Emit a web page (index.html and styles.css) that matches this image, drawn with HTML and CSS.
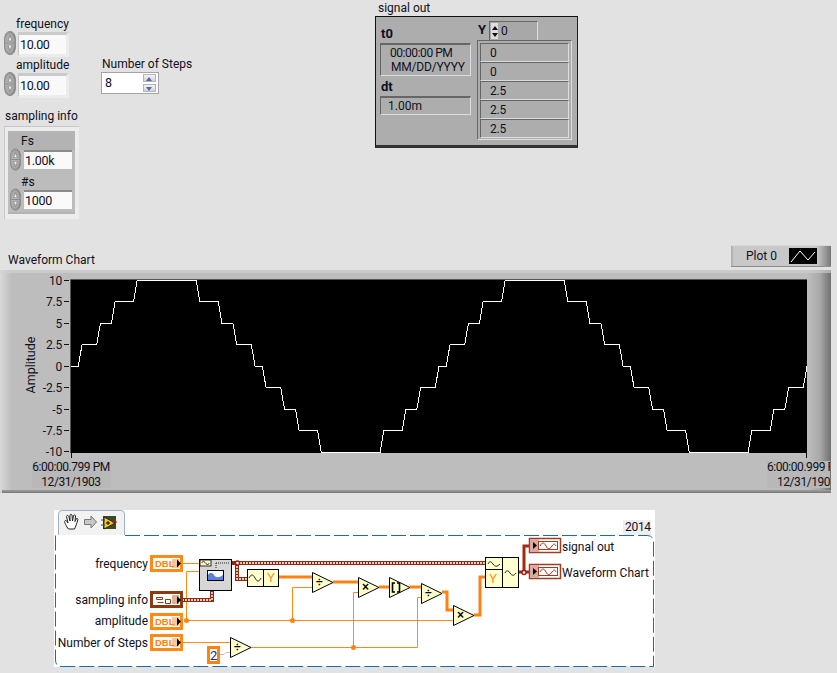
FILE: index.html
```html
<!DOCTYPE html>
<html lang="en">
<head>
<meta charset="utf-8">
<title>LabVIEW panel</title>
<link rel="stylesheet" href="styles.css">
</head>
<body>
<svg class="defs" width="0" height="0" aria-hidden="true">
  <defs>
    <radialGradient id="spinFill" cx="45%" cy="50%" r="62%">
      <stop offset="0" stop-color="#c4c4c4"/><stop offset="0.65" stop-color="#a6a6a6"/><stop offset="1" stop-color="#6e6e6e"/>
    </radialGradient>
    <symbol id="spin" viewBox="0 0 12 24">
      <path d="M6 .5C9.500 .5 11.500 4 11.500 9V15C11.500 20 9.500 23.500 6 23.500S.5 20 .5 15V9C.5 4 2.500 .5 6 .5Z" fill="url(#spinFill)" stroke="#8c8c8c"/>
      <path d="M1.500 12H10.500" stroke="#8a8a8a" fill="none"/>
      <path d="M6 4.500L3.800 10H8.200Z" fill="#ececec" stroke="#777" stroke-width=".7"/>
      <path d="M6 19.500L3.800 14H8.200Z" fill="#ececec" stroke="#777" stroke-width=".7"/>
    </symbol>
    <clipPath id="plotClip"><rect x="71" y="10" width="736" height="173"/></clipPath>
    <clipPath id="rightClip"><rect x="700" y="180" width="130" height="40"/></clipPath>
  </defs>
</svg>

<main class="panel">
  <div class="lbl lbl-freq">frequency</div>
  <div class="num num-freq"><svg class="spin"><use href="#spin"/></svg><div class="field">10.00</div></div>
  <div class="lbl lbl-amp">amplitude</div>
  <div class="num num-amp"><svg class="spin"><use href="#spin"/></svg><div class="field">10.00</div></div>

  <div class="lbl lbl-steps">Number of Steps</div>
  <div class="steps">
    <span class="steps-val">8</span>
    <span class="steps-btns"><span class="step-btn step-up"></span><span class="step-btn step-down"></span></span>
  </div>

  <div class="lbl lbl-samp">sampling info</div>
  <section class="cluster">
    <div class="cluster-inner">
      <div class="cl-label cl-fs">Fs</div>
      <div class="cl-row"><svg class="spin cl-spin"><use href="#spin"/></svg><div class="cl-field">1.00k</div></div>
      <div class="cl-label cl-ns">#s</div>
      <div class="cl-row"><svg class="spin cl-spin"><use href="#spin"/></svg><div class="cl-field">1000</div></div>
    </div>
  </section>

  <div class="lbl lbl-sig">signal out</div>
  <section class="wave">
    <div class="wave-left">
      <div class="bold wl-t0">t0</div>
      <div class="inset inset-t0"><div class="t0-time">00:00:00 PM</div><div class="t0-date">MM/DD/YYYY</div></div>
      <div class="bold wl-dt">dt</div>
      <div class="inset inset-dt">1.00m</div>
    </div>
    <div class="wave-right">
      <div class="y-head">
        <span class="bold y-name">Y</span>
        <div class="y-index">
          <span class="y-btns"><span class="y-up"></span><span class="y-down"></span></span>
          <span>0</span>
        </div>
      </div>
      <div class="y-array">
        <div class="cell">0</div><div class="cell">0</div><div class="cell">2.5</div><div class="cell">2.5</div><div class="cell">2.5</div>
      </div>
    </div>
  </section>

  <div class="lbl lbl-chart">Waveform Chart</div>
  <div class="legend">
    <span class="legend-name">Plot 0</span>
    <svg class="legend-swatch" width="28" height="16" viewBox="0 0 28 16"><rect width="28" height="16" fill="#000"/><path d="M2 14L11 3L19 12L26 4" fill="none" stroke="#fff"/></svg>
  </div>

  <section class="chart">
    <svg class="chart-svg" width="831" height="223" viewBox="0 0 831 223">
      <rect x="32" y="191" width="79" height="27" fill="#b8b8b8"/>
      <rect x="767" y="191" width="63" height="27" fill="#b8b8b8"/>
      <rect x="71" y="10" width="736" height="173" fill="#000"/>
      <path class="plot-edge" d="M70.5 183V9.500H807"/>
      <g clip-path="url(#plotClip)">
      <path class="plot-line" d="M71 96H78.360
        l3.680 -21.500h14.720l3.680 -21.500h11.040l3.680 -21.500h18.400l3.680 -21.500h58.880l3.680 21.500h18.400l3.680 21.500h11.040l3.680 21.500h14.720l3.680 21.500h7.360
        l3.680 21.500h14.720l3.680 21.500h11.040l3.680 21.500h18.400l3.680 21.500h58.880l3.680 -21.500h18.400l3.680 -21.500h11.040l3.680 -21.500h14.720l3.680 -21.500h7.360
        l3.680 -21.500h14.720l3.680 -21.500h11.040l3.680 -21.500h18.400l3.680 -21.500h58.880l3.680 21.500h18.400l3.680 21.500h11.040l3.680 21.500h14.720l3.680 21.500h7.360
        l3.680 21.500h14.720l3.680 21.500h11.040l3.680 21.500h18.400l3.680 21.500h58.880l3.680 -21.500h18.400l3.680 -21.500h11.040l3.680 -21.500h14.720l3.680 -21.500"/>
      </g>
      <path class="ticks" d="M64 10.500H69M64 31.500H69M64 53.500H69M64 74.500H69M64 96.500H69M64 117.500H69M64 139.500H69M64 160.500H69M64 181.500H69M71.500 183V188M806.500 183V188"/>
      <g class="txt txt-end txt-num">
        <text x="62" y="15">10</text><text x="62" y="36">7.5</text><text x="62" y="58">5</text><text x="62" y="79">2.5</text>
        <text x="62" y="101">0</text><text x="62" y="122">-2.5</text><text x="62" y="144">-5</text><text x="62" y="165">-7.5</text><text x="62" y="186">-10</text>
      </g>
      <text class="txt txt-mid txt-axis" transform="translate(35,95) rotate(-90)">Amplitude</text>
      <text class="txt txt-mid txt-time" x="71" y="201">6:00:00.799 PM</text>
      <text class="txt txt-mid txt-time" x="71" y="216">12/31/1903</text>
      <g clip-path="url(#rightClip)">
        <text class="txt txt-time" x="767" y="201">6:00:00.999 PM</text>
        <text class="txt txt-time" x="777" y="216">12/31/1903</text>
      </g>
    </svg>
  </section>

  <section class="diagram">
    <svg class="diagram-svg" width="601" height="157" viewBox="54 510 601 157">
      <!-- tab -->
      <path class="tab" d="M58.500 535V514Q58.500 510.500 62 510.500H121Q124.500 510.500 124.500 514V535"/>
      <path class="hand" d="M67 527C64.500 523 64 521 65.500 520.500C66.500 520.500 67.500 522 68 523L66.500 516.500C67 515 68 515 68.800 516.500L70 521L70 515C70.500 514 71.500 514 72 515L72.500 521L73.500 515.500C74.500 514.500 75.500 515 75.500 516L75 521.500L76.500 518.500C77.500 518 78 519 77.800 520C77 523 75.500 527 74.500 529H68.500Z"/>
      <path class="arrow" d="M84.500 519.500H91V516L96.500 522L91 528V524.500H84.500Z"/>
      <g>
        <rect x="103" y="516" width="13" height="13" fill="#3c4a2a"/>
        <path d="M104 517L115 523L104 529Z" fill="#f4d000" stroke="#000" stroke-width=".7"/>
        <path d="M101 520H105M101 525H105" stroke="#1a3ad0" fill="none"/>
        <path d="M112 522H117" stroke="#d01010" fill="none"/>
        <path d="M106 523H110M108 521V525" stroke="#000" fill="none"/>
      </g>
      <rect class="version-bg" x="623" y="520" width="28" height="15"/>
      <text class="txt txt-ver" x="625" y="531">2014</text>
      <path class="frame" d="M125 535.500H647Q653.500 535.500 653.500 542V666.500H62Q55.500 666.500 55.500 660V535.500H58"/>

      <!-- thin wires -->
      <g class="w-thin">
        <path d="M182 563.500H199"/>
        <path d="M199 571.500H186.500V620.500H453"/>
        <path d="M292.500 620.500V587.500H312"/>
        <path d="M182 642.500H230"/>
        <path d="M251 647.500H417.500V597.500H421"/>
        <path d="M353.500 647.500V592.500H358"/>
      </g>
      <circle class="dot" cx="186.500" cy="620.500" r="2.500"/>
      <circle class="dot" cx="292.500" cy="620.500" r="2.500"/>
      <circle class="dot" cx="353.500" cy="647.500" r="2.500"/>
      <path class="w-coerce" d="M220 654.500H224L226 652.500H230"/>
      <!-- thick wires -->
      <g class="w-thick">
        <path d="M278 577H312"/>
        <path d="M333 582H358"/>
        <path d="M379 587H389"/>
        <path d="M410 587H421"/>
        <path d="M442 592H447V610H453"/>
        <path d="M474 615H480V577H485"/>
      </g>
      <!-- cluster wires -->
      <g class="w-brown">
        <path d="M182 600H212V591"/>
        <path d="M231 563H485"/>
        <path d="M237 563V579H247"/>
      </g>
      <g class="w-dots">
        <path d="M182 600H212V591"/>
        <path d="M237 563H485"/>
        <path d="M237 563V579H247"/>
      </g>
      <g class="w-wave">
        <path d="M518 572H529"/>
        <path d="M524 572V546H529"/>
      </g>
      <circle class="wjunc" cx="237.500" cy="563" r="2"/>
      <circle class="wjunc" cx="524" cy="572.500" r="2"/>

      <!-- terminals -->
      <g class="term-dbl">
        <rect x="151.500" y="556.500" width="30" height="14"/>
        <rect x="151.500" y="614.500" width="30" height="14"/>
        <rect x="151.500" y="635.500" width="30" height="14"/>
      </g>
      <g class="term-shade">
        <rect x="172" y="559" width="7" height="9"/><rect x="172" y="617" width="7" height="9"/><rect x="172" y="638" width="7" height="9"/>
      </g>
      <g class="term-txt">
        <text x="155" y="567">DBL</text><text x="155" y="625">DBL</text><text x="155" y="646">DBL</text>
      </g>
      <rect class="term-cl" x="151.500" y="592.500" width="30" height="14"/>
      <rect class="term-cl-in" x="172" y="595" width="7" height="9"/>
      <path class="cl-glyph" d="M156.500 597.500H162.500V599.500H156.500ZM157.500 602.500H163.500M165.500 599.500H170.500V603.500H165.500Z"/>
      <path class="tri-black" d="M177 559.500L181 563.500L177 567.500ZM177 596L181 600L177 604ZM177 617.500L181 621.500L177 625.500ZM177 638.500L181 642.500L177 646.500Z"/>

      <!-- build node -->
      <rect class="n-gray" x="199.500" y="559.500" width="32" height="31"/>
      <rect class="n-head" x="200" y="560" width="11" height="6"/>
      <path class="n-sine" d="M201.500 563C203 561 204 561 205.500 563S208 565 209.500 563"/>
      <path class="n-dots" d="M216 563H229M216 563V569"/>
      <rect class="n-inner" x="207.500" y="570.500" width="16" height="10"/>
      <path class="n-blue" d="M208 575C210 572 212 572 214 575S219 578 223 575V580H208Z"/>

      <!-- get Y -->
      <rect class="n-yellow" x="247.500" y="569.500" width="31" height="17"/>
      <path class="n-div" d="M263.500 569.500V586.500"/>
      <path class="n-sine-b" d="M249 578C251 574 253 574 255 578S259 582 261 578"/>
      <text class="y-glyph" x="267" y="582">Y</text>

      <!-- primitives -->
      <g class="prim">
        <path d="M312.500 572.500L333 582.500L312.500 592.500Z"/>
        <path d="M358.500 577.500L379 587.500L358.500 597.500Z"/>
        <path d="M389.500 577.500L410 587.500L389.500 597.500Z"/>
        <path d="M421.500 583.500L442 593.500L421.500 603.500Z"/>
        <path d="M453.500 605.500L474 615.500L453.500 625.500Z"/>
        <path d="M230.500 637.500L251 647.500L230.500 657.500Z"/>
      </g>
      <g class="glyph-b">
        <text x="316" y="586">÷</text><text x="362" y="591">×</text><text x="425" y="597">÷</text><text x="457" y="619">×</text><text x="234" y="651">÷</text>
      </g>
      <path class="round-glyph" d="M395 583H392.500V592H395M397 583H399.500V592H397"/>

      <!-- constant -->
      <rect class="const" x="208.500" y="647.500" width="10" height="15"/>
      <text class="const-txt" x="210" y="660">2</text>

      <!-- build waveform -->
      <rect class="n-yellow" x="485.500" y="557.500" width="33" height="30"/>
      <path class="n-div" d="M502.500 557.500V587.500M485.500 569.500H502.500"/>
      <path class="n-sine-b" d="M488 564C489.500 561 491 561 493 564S497 567 500 564"/>
      <path class="n-sine-b" d="M505 573C506.500 570 508 570 510 573S514 576 516 573"/>
      <text class="y-glyph" x="489" y="583">Y</text>

      <!-- indicators -->
      <g class="term-ind">
        <rect x="529.500" y="538.500" width="31" height="14"/>
        <rect x="529.500" y="564.500" width="31" height="14"/>
      </g>
      <rect class="term-pink" x="530" y="539" width="9" height="13"/>
      <rect class="term-pink" x="530" y="565" width="9" height="13"/>
      <rect class="term-box" x="538.500" y="541.500" width="19" height="8"/>
      <rect class="term-box" x="538.500" y="567.500" width="19" height="8"/>
      <path class="tri-black" d="M533 542L537 545.500L533 549ZM533 568L537 571.500L533 575Z"/>
      <path class="sine-r" d="M540 546C542 542 544 542 546 546S550 549 552 546S555 544 556 546"/>
      <path class="sine-r" d="M540 572C542 568 544 568 546 572S550 575 552 572S555 570 556 572"/>

      <!-- labels -->
      <g class="txt txt-end">
        <text x="148" y="568">frequency</text>
        <text x="148" y="604">sampling info</text>
        <text x="148" y="625">amplitude</text>
        <text x="148" y="647">Number of Steps</text>
      </g>
      <text class="txt" x="562" y="551">signal out</text>
      <text class="txt" x="562" y="577">Waveform Chart</text>
    </svg>
  </section>
</main>
</body>
</html>
```
FILE: styles.css
```css
* { box-sizing: border-box; }
html, body { margin: 0; height: 100%; background: #e2e2e2; overflow: hidden; }
body { font: 12px/15px Roboto, "Liberation Sans", sans-serif; color: #101020; }
.defs { position: absolute; }
.panel { position: relative; width: 837px; height: 673px; }
.lbl { position: absolute; white-space: nowrap; }
.lbl-freq { left: 16px; top: 17px; }
.lbl-amp { left: 16px; top: 58px; }
.lbl-steps { left: 102px; top: 57px; }
.lbl-samp { left: 5px; top: 109px; }
.lbl-sig { left: 378px; top: 1px; }
.lbl-chart { left: 8px; top: 253px; }

/* numeric controls */
.num { position: absolute; left: 4px; width: 65px; height: 25px; display: flex; align-items: flex-start; gap: 2px; }
.num-freq { top: 32px; }
.num-amp { top: 73px; }
.spin { width: 12px; height: 24px; flex: none; margin-top: -1px; }
.field { flex: 1; height: 25px; padding: 1px 0 0 1px; background: #f9f9f9; border-style: solid; border-width: 3px 3px 3px 1px; border-color: #cbcbcb #ececec #ececec #c4c4c4; line-height: 17px; font-size: 12.5px; letter-spacing: -.4px; }

.steps { position: absolute; left: 101px; top: 72px; width: 58px; height: 22px; background: #fff; border: 1px solid #a5a5a5; display: flex; justify-content: space-between; padding: 1px 2px 1px 3px; }
.steps-val { line-height: 18px; font-size: 12.5px; }
.steps-btns { width: 13px; display: flex; flex-direction: column; gap: 2px; }
.step-btn { flex: 1; background: linear-gradient(#f4f4f4, #cfd3da); border: 1px solid #b4b4b4; position: relative; }
.step-btn::after { content: ""; position: absolute; left: 2px; border: 3px solid transparent; border-left-width: 3.5px; border-right-width: 3.5px; }
.step-up::after { top: -1px; border-bottom: 4px solid #5567a0; }
.step-down::after { top: 2px; border-top: 4px solid #5567a0; }

/* cluster */
.cluster { position: absolute; left: 4px; top: 126px; width: 75px; height: 93px; padding: 4px 4px 5px 3px; background: #ececec; border-top: 1px solid #c8c8c8; border-left: 1px solid #c8c8c8; }
.cluster-inner { height: 83px; background: #b3b3b3; display: flex; flex-direction: column; }
.cl-label { padding-left: 13px; }
.cl-fs { height: 19px; line-height: 20px; }
.cl-ns { height: 18px; line-height: 20px; background: #bcbcbc; }
.cl-row { display: flex; align-items: flex-start; gap: 3px; padding: 0 3px 0 2px; height: 22px; background: #bcbcbc; }
.cl-spin { width: 11px; height: 23px; margin-top: -2px; }
.cl-field { flex: 1; height: 19px; padding-left: 1px; background: #fafafa; border-top: 2px solid #8b8b8b; font-size: 12.5px; line-height: 17px; letter-spacing: -.3px; }

/* waveform indicator */
.wave { position: absolute; left: 375px; top: 16px; width: 203px; height: 132px; background: #adadad; border: 1px solid #111; border-bottom-width: 3px; border-color: #111 #222 #333 #111; display: flex; padding: 4px 4px 5px 4px; gap: 6px; }
.wave-left { width: 91px; }
.bold { font-weight: 700; font-size: 13px; }
.wl-t0 { height: 22px; line-height: 26px; padding-left: 1px; }
.inset { border: 1px solid; border-width: 2px 1px 1px 1px; border-color: #666 #ddd #ddd #666; }
.inset-t0 { height: 33px; line-height: 14px; padding-top: 1px; }
.t0-time { padding-left: 9px; letter-spacing: -.45px; }
.t0-date { padding-left: 10px; letter-spacing: -.2px; }
.wl-dt { height: 20px; line-height: 22px; padding-left: 1px; }
.inset-dt { height: 19px; line-height: 16px; padding-left: 7px; }
.wave-right { flex: 1; display: flex; flex-direction: column; }
.y-head { display: flex; height: 21px; gap: 2px; }
.y-name { padding-left: 1px; line-height: 18px; width: 10px; }
.y-index { width: 49px; display: flex; gap: 3px; align-items: center; border: 1px solid; border-width: 1px 1px 0 1px; border-color: #666 #ddd #ddd #666; background: #a8a8a8; padding-left: 1px; }
.y-btns { width: 7px; display: flex; flex-direction: column; gap: 1px; height: 16px; background: #ddd; align-items: center; justify-content: center; }
.y-up { border: 3px solid transparent; border-bottom: 4px solid #111; margin-top: -3px; }
.y-down { border: 3px solid transparent; border-top: 4px solid #111; margin-bottom: -3px; margin-top: 2px; }
.y-array { width: 95px; height: 100px; border: 1px solid; border-color: #666 #ddd #ddd #666; padding: 2px 2px 1px 2px; display: flex; flex-direction: column; }
.cell { height: 19px; padding-left: 9px; line-height: 18px; border: 1px solid; border-color: #666 #ddd #ddd #666; letter-spacing: -.2px; }

/* legend */
.legend { position: absolute; left: 731px; top: 245px; width: 100px; height: 22px; display: flex; align-items: center; justify-content: flex-end; gap: 12px; padding-right: 14px; background: linear-gradient(90deg, #a8a8a8 0, #c8c8c8 3px, #c8c8c8 86%, #777 100%); border-bottom: 1px solid #8c8c8c; border-top: 1px solid #d8d8d8; }
.legend-swatch { flex: none; }

/* chart */
.chart { position: absolute; left: 0; top: 270px; width: 831px; height: 223px; background: linear-gradient(90deg, #d8d8d8 0, #bdbdbd 12px, #bdbdbd 808px, #a8a8a8 820px, #707070 831px); border-top: 0; }
.chart::before { content: ""; position: absolute; left: 0; right: 0; top: 0; height: 3px; background: #d2d2d2; opacity: .6; }
.chart::after { content: ""; position: absolute; left: 2px; right: 0; bottom: 0; height: 3px; background: linear-gradient(#a0a0a0, #777); }
.chart-svg { display: block; position: relative; }
.plot-edge { fill: none; stroke: #555; }
.plot-line { fill: none; stroke: #fff; stroke-width: 1; shape-rendering: crispEdges; }
.ticks { fill: none; stroke: #111; }

/* text in drawings */
.txt { font: 12px Roboto, "Liberation Sans", sans-serif; fill: #101020; }
.txt-end { text-anchor: end; }
.txt-mid { text-anchor: middle; }
.txt-num { letter-spacing: -.2px; }
.txt-axis { font-size: 12.5px; }
.txt-time { letter-spacing: -.45px; }
.txt-ver { letter-spacing: -.3px; }

/* diagram */
.diagram { position: absolute; left: 54px; top: 510px; width: 601px; height: 157px; background: #fff; }
.diagram-svg { display: block; }
.tab { fill: #f2f2f2; stroke: #9fb0c4; }
.hand { fill: #fff; stroke: #222; stroke-width: 1; }
.arrow { fill: #c8c8c8; stroke: #777; }
.version-bg { fill: #eee; }
.frame { fill: none; stroke: #1c6aa6; stroke-width: 1; stroke-dasharray: 15 4; }
.w-thin { fill: none; stroke: #ff8a1a; stroke-width: 1; }
.w-thick { fill: none; stroke: #ff8210; stroke-width: 3; }
.w-coerce { fill: none; stroke: #bbb; stroke-width: 1; }
.dot { fill: #ff8210; }
.w-brown { fill: none; stroke: #8d2a10; stroke-width: 4; }
.w-dots { fill: none; stroke: #fff; stroke-width: 1.4; stroke-dasharray: 2 1; }
.w-wave { fill: none; stroke: #a52a10; stroke-width: 3; }
.wjunc { fill: #fff; stroke: #a01a10; stroke-width: 1.4; }
.term-dbl rect { fill: #fff; stroke: #ff8a1a; stroke-width: 3; }
.term-shade rect { fill: #f6c79a; }
.term-txt text { font: 700 9.5px "Liberation Sans", sans-serif; fill: #ff8210; }
.term-cl { fill: #fff; stroke: #8a3a14; stroke-width: 3; }
.term-cl-in { fill: #d8b49a; }
.cl-glyph { fill: none; stroke: #8a3a14; stroke-width: 1; }
.tri-black { fill: #000; }
.n-gray { fill: #d6d6d6; stroke: #000; }
.n-head { fill: #fff8c8; stroke: #000; stroke-width: .8; }
.n-sine { fill: none; stroke: #000; stroke-width: .8; }
.n-dots { fill: none; stroke: #222; stroke-dasharray: 1 1; }
.n-inner { fill: #fff; stroke: #000; }
.n-blue { fill: #5a82d8; }
.n-yellow { fill: #ffffd0; stroke: #000; }
.n-div { fill: none; stroke: #000; }
.n-sine-b { fill: none; stroke: #222; stroke-width: 1; }
.y-glyph { font: 12px "Liberation Sans", sans-serif; fill: #ff8210; }
.prim path { fill: #ffffcc; stroke: #000; }
.glyph-b text { font: 700 12px "Liberation Sans", sans-serif; fill: #000; }
.round-glyph { fill: none; stroke: #000; stroke-width: 1.6; }
.const { fill: #fff; stroke: #ff8210; stroke-width: 3; }
.const-txt { font: 13px Roboto, sans-serif; fill: #1a2a8a; }
.term-ind rect { fill: #fff; stroke: #a03c20; stroke-width: 1.5; }
.term-pink { fill: #dca8a4; }
.term-box { fill: #fff; stroke: #a03c20; stroke-width: 1; }
.sine-r { fill: none; stroke: #b02a18; stroke-width: 1; }
```
